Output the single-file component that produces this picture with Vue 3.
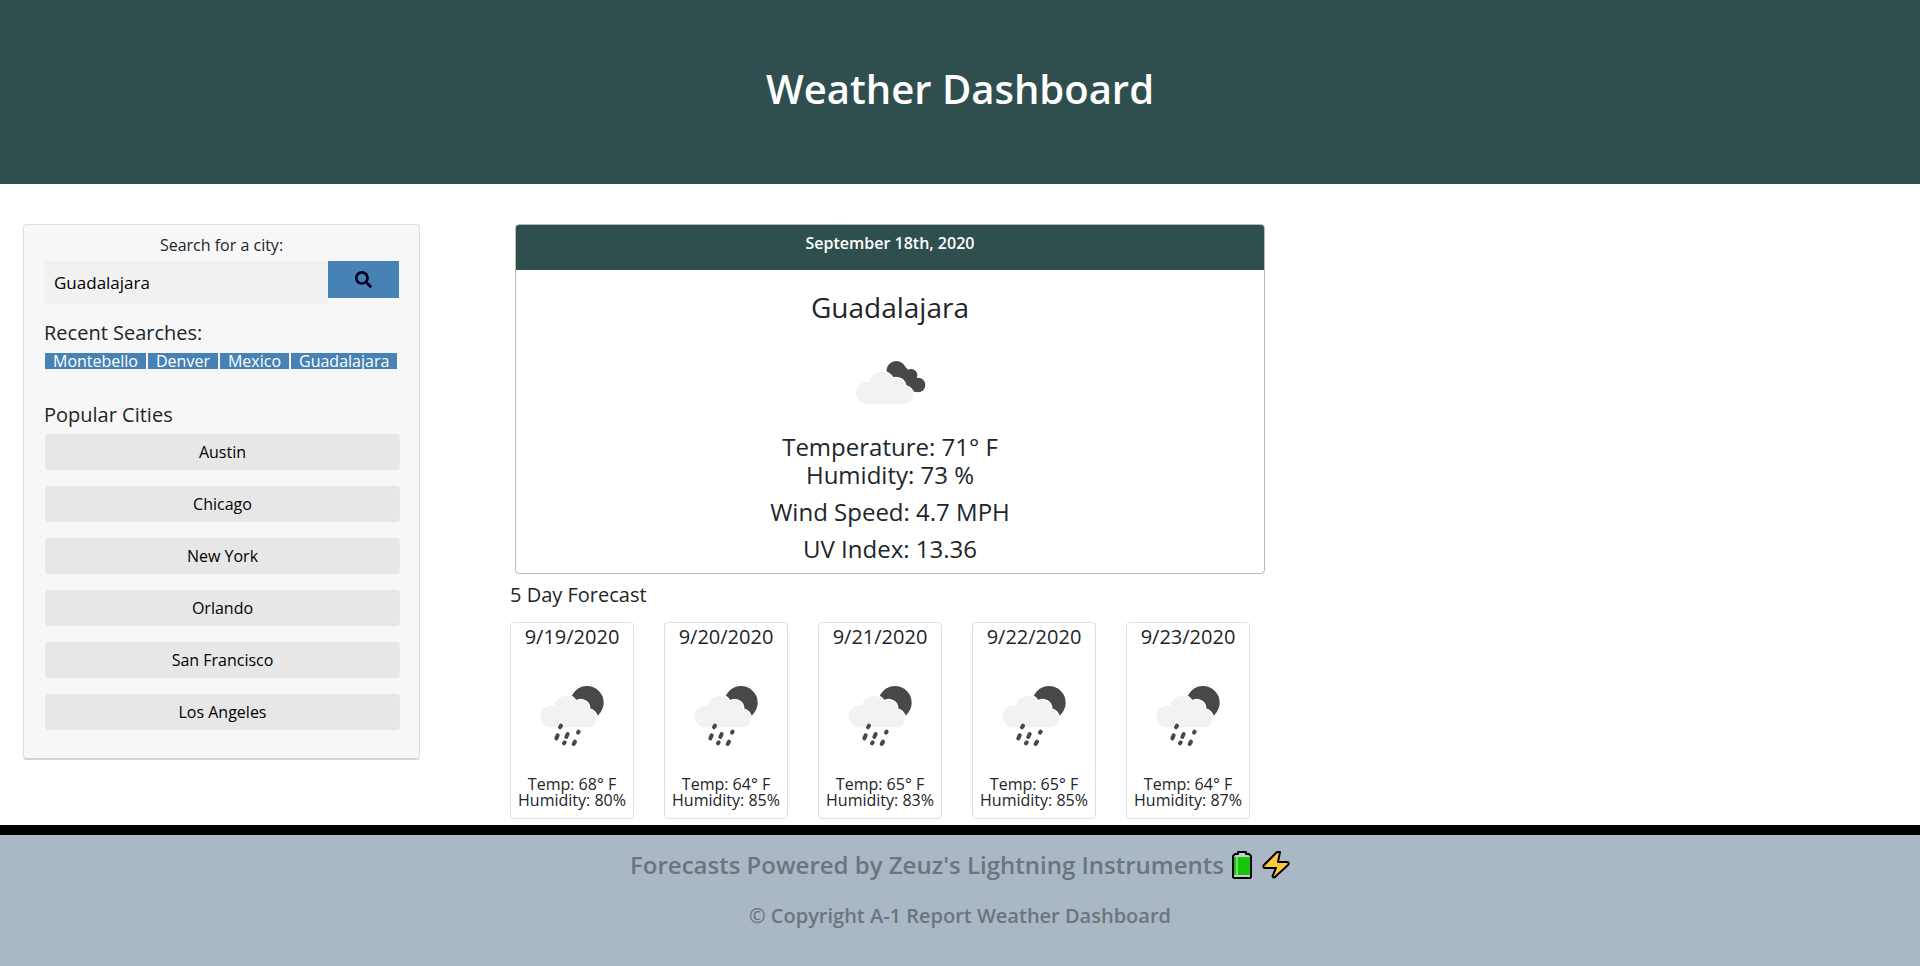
<script setup>
import { ref } from 'vue'

const query = ref('Guadalajara')
const recent = ['Montebello', 'Denver', 'Mexico', 'Guadalajara']
const popular = ['Austin', 'Chicago', 'New York', 'Orlando', 'San Francisco', 'Los Angeles']
const forecast = [
  { date: '9/19/2020', temp: 68, humidity: 80 },
  { date: '9/20/2020', temp: 64, humidity: 85 },
  { date: '9/21/2020', temp: 65, humidity: 83 },
  { date: '9/22/2020', temp: 65, humidity: 85 },
  { date: '9/23/2020', temp: 64, humidity: 87 },
]
</script>

<template>
  <div class="page">
    <header class="banner">
      <h1>Weather Dashboard</h1>
    </header>

    <main class="content">
      <aside class="sidebar">
        <form class="search" @submit.prevent>
          <label for="city">Search for a city:</label>
          <div class="search-row">
            <input id="city" v-model="query" type="text" />
            <button type="submit" aria-label="Search">
              <svg width="17" height="17" viewBox="0 0 512 512" aria-hidden="true">
                <path fill="#00002b" d="M505 442.700 405.300 343c-4.500-4.500-10.600-7-17-7H372c27.600-35.300 44-79.700 44-128C416 93.100 322.900 0 208 0S0 93.100 0 208s93.100 208 208 208c48.300 0 92.700-16.400 128-44v16.300c0 6.400 2.500 12.500 7 17l99.700 99.700c9.400 9.400 24.600 9.400 33.900 0l28.300-28.300c9.400-9.400 9.400-24.600.1-34zM208 336c-70.700 0-128-57.200-128-128 0-70.700 57.200-128 128-128 70.700 0 128 57.200 128 128 0 70.700-57.200 128-128 128z" />
              </svg>
            </button>
          </div>
        </form>

        <h2 class="side-title">Recent Searches:</h2>
        <div class="tags">
          <button v-for="c in recent" :key="c" type="button">{{ c }}</button>
        </div>

        <h2 class="side-title">Popular Cities</h2>
        <div class="cities">
          <button v-for="c in popular" :key="c" type="button">{{ c }}</button>
        </div>
      </aside>

      <section class="report">
        <article class="today">
          <div class="today-date">September 18th, 2020</div>
          <div class="today-body">
            <h2>Guadalajara</h2>
            <svg class="weather" viewBox="239 156 300 300" role="img" aria-label="Broken clouds">
              <g fill="#48484a">
                <circle cx="408" cy="273" r="30" />
                <circle cx="452" cy="286" r="19" />
                <circle cx="473" cy="315" r="22" />
                <path d="M390 280 436 262 462 290 480 330 460 336 400 310z" />
              </g>
              <g fill="#f2f2f2" stroke="#fff" stroke-width="8" paint-order="stroke">
                <path d="M323 371a33 33 0 1 1 4-65a37 37 0 0 1 70-10 28 28 0 0 1 38 24 26 26 0 0 1 5 51z" />
              </g>
            </svg>
            <p class="temperature">Temperature: 71° F</p>
            <p>Humidity: 73 %</p>
            <p>Wind Speed: 4.7 MPH</p>
            <p>UV Index: 13.36</p>
          </div>
        </article>

        <h2 class="forecast-title">5 Day Forecast</h2>
        <div class="forecast">
          <article v-for="d in forecast" :key="d.date" class="day">
            <h3>{{ d.date }}</h3>
            <svg class="weather" viewBox="65 318 300 300" role="img" aria-label="Rain">
              <circle cx="260" cy="428" r="50" fill="#48484a" />
              <path fill="#f2f2f2" stroke="#fff" stroke-width="8" paint-order="stroke" d="M158 502a33 33 0 1 1 3-65a36 36 0 0 1 66-12 25 25 0 0 1 39 24 27 27 0 0 1 3 53z" />
              <g stroke="#48484a" stroke-width="12" stroke-linecap="round">
                <path d="M179 502l3-5M168 535l4-9M198 531l4-9M233 518l2-3M191 550l2-3M220 552l4-7" />
              </g>
            </svg>
            <p>Temp: {{ d.temp }}° F</p>
            <p>Humidity: {{ d.humidity }}%</p>
          </article>
        </div>
      </section>
    </main>

    <footer class="footer">
      <p class="powered">
        <span>Forecasts Powered by Zeuz's Lightning Instruments</span>
        <svg class="battery" width="20" height="28" viewBox="0 0 20 28" role="img" aria-label="Battery">
          <path d="M6 1h8v2h3l2 2v21l-1 1H2l-1-1V5l2-2h3z" fill="#ccc" stroke="#000" stroke-width="2" stroke-linejoin="round" />
          <path d="M2 6h16v18H2z" fill="#16c60c" />
          <path d="M4 6h2v18H4z" fill="#6fe067" />
        </svg>
        <svg width="28" height="28" viewBox="0 0 28 28" role="img" aria-label="Lightning">
          <path d="M15 1h3l-2 10h9c2 0 2 2 1 3L13 26c-2 1-3 0-2-2l3-7H3c-2 0-2-2-1-3z" fill="#ffc83d" stroke="#000" stroke-width="2" stroke-linejoin="round" />
        </svg>
      </p>
      <p class="copyright">© Copyright A-1 Report Weather Dashboard</p>
    </footer>
  </div>
</template>

<style>
body {
  margin: 0;
}
</style>

<style scoped>
.page {
  display: flex;
  flex-direction: column;
  min-height: 100vh;
  background: #fff;
  color: #212529;
  font-family: "Open Sans", "Noto Sans", sans-serif;
  font-size: 16px;
  line-height: 24px;
}
.page * {
  box-sizing: border-box;
}
h1, h2, h3, p {
  margin: 0;
  font-weight: 400;
}
button, input {
  margin: 0;
  border: 0;
  font-family: inherit;
}
button {
  cursor: pointer;
}
.banner {
  padding: 65px 32px 71px;
  background: #2f4f4f;
  color: #fff;
  text-align: center;
}
.banner h1 {
  font-size: 40px;
  font-weight: 600;
  line-height: 48px;
}
.content {
  display: grid;
  grid-template-columns: 397fr 755fr 565fr;
  column-gap: 90px;
  align-items: start;
  padding: 40px 0 6px 23px;
}
.sidebar {
  padding: 8px 19px 28px 20px;
  border: 1px solid #dfdfdf;
  border-bottom: 2px solid #d4d4d4;
  border-radius: 4px;
  background: #f7f7f7;
}
.search {
  margin-right: 1px;
}
.search label {
  display: block;
  margin-bottom: 4px;
  text-align: center;
}
.search-row {
  display: flex;
  align-items: flex-start;
  margin-bottom: 17px;
}
.search input {
  width: 80%;
  height: 43px;
  padding: 10px;
  background: #f1f1f1;
  color: #000;
  font-size: 17px;
}
.search button {
  display: flex;
  width: 20%;
  align-items: center;
  justify-content: center;
  height: 37px;
  padding: 0;
  background: #4682b4;
}
.side-title {
  margin-bottom: 7px;
  font-size: 20px;
  line-height: 24px;
}
.tags {
  display: flex;
  gap: 2px;
  margin: 8px 0 34px 1px;
}
.tags button {
  padding: 0 8px;
  background: #4682b4;
  color: #fff;
  font-size: 16px;
  line-height: 16px;
}
.cities {
  display: grid;
  gap: 16px;
  margin-left: 1px;
}
.cities button {
  padding: 6px 12px;
  border-radius: 4px;
  background: #e7e7e7;
  color: #000;
  font-size: 16px;
  line-height: 24px;
}
.today {
  margin-left: 5px;
  border: 1px solid #bababa;
  border-radius: 4px;
  text-align: center;
}
.today-date {
  padding: 6px 0 15px;
  border-radius: 3px 3px 0 0;
  background: #2f4f4f;
  color: #fff;
  font-weight: 600;
}
.today-body {
  padding: 20px 20px 1px;
}
.today-body h2 {
  margin-bottom: 8px;
  font-size: 28px;
  line-height: 34px;
}
.weather {
  display: block;
  width: 100px;
  height: 100px;
  margin: 0 auto;
}
.today-body .weather {
  margin-bottom: 1px;
}
.today-body p {
  margin-bottom: 9px;
  font-size: 24px;
  line-height: 28px;
}
.today-body .temperature {
  margin-bottom: 0;
}
.forecast-title {
  margin: 9px 0 15px;
  font-size: 20px;
  line-height: 24px;
}
.forecast {
  display: grid;
  grid-template-columns: repeat(5, 1fr);
  gap: 30px;
  margin-right: 15px;
}
.day {
  padding: 2px 0 10px;
  border: 1px solid #dfdfdf;
  border-radius: 4px;
  text-align: center;
}
.day h3 {
  margin-bottom: 17px;
  font-size: 20px;
  line-height: 24px;
}
.day .weather {
  margin-bottom: 10px;
}
.day p {
  line-height: 16px;
  white-space: nowrap;
}
.footer {
  flex: 1;
  padding: 15px 16px 36px;
  border-top: 10px solid #000;
  background: #aab7c4;
  color: #6c757d;
  text-align: center;
}
.footer p {
  font-weight: 600;
}
.footer .powered {
  display: flex;
  align-items: center;
  justify-content: center;
  margin-bottom: 25px;
  font-size: 24px;
  line-height: 29px;
}
.battery {
  margin: 0 10px 0 8px;
}
.copyright {
  font-size: 20px;
  line-height: 24px;
}
</style>
